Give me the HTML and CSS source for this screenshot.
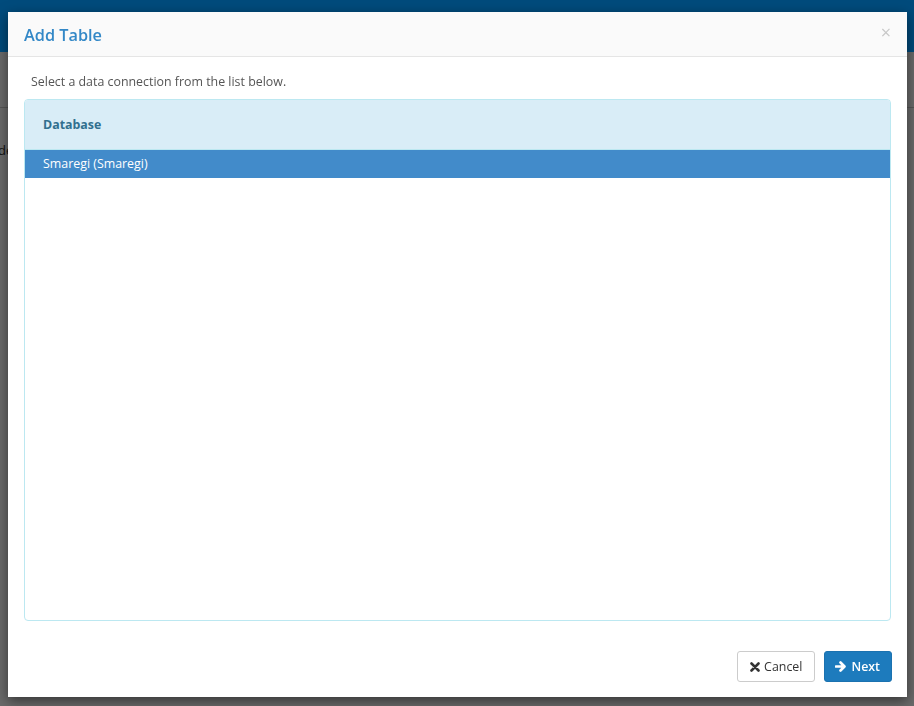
FILE: index.html
```html
<!DOCTYPE html>
<html lang="en">
<head>
    <meta charset="UTF-8">
    <title>Add Table</title>
    <link rel="stylesheet" href="styles.css">
</head>
<body>
    <div class="page">
        <div class="topbar"></div>
        <div class="subbar"></div>
        <div class="page-text">de</div>
    </div>

    <div class="modal">
        <div class="modal-header">
            <h4 class="modal-title">Add Table</h4>
            <span class="close">&times;</span>
        </div>
        <div class="modal-body">
            <p class="hint">Select a data connection from the list below.</p>
            <div class="panel">
                <div class="panel-heading">Database</div>
                <div class="list">
                    <div class="list-item active">Smaregi (Smaregi)</div>
                </div>
            </div>
        </div>
        <div class="modal-footer">
            <button class="btn btn-default">
                <svg width="10" height="10" viewBox="0 0 10 10"><path d="M1.5 1.5 L8.5 8.5 M8.5 1.5 L1.5 8.5" stroke="#333" stroke-width="2.6" stroke-linecap="round"/></svg>
                Cancel
            </button>
            <button class="btn btn-primary">
                <svg width="12" height="11" viewBox="0 0 12 11"><path d="M1 5.5 H9 M5.5 1.5 L9.5 5.5 L5.5 9.5" stroke="#fff" stroke-width="2.6" fill="none" stroke-linecap="round" stroke-linejoin="round"/></svg>
                Next
            </button>
        </div>
    </div>
</body>
</html>
```

FILE: styles.css
```css
html, body {
    margin: 0;
    padding: 0;
    height: 100%;
}
body {
    font-family: 'Open Sans', 'Noto Sans', sans-serif;
    font-size: 12.4px;
    color: #333;
    background: #6a6a6a;
    overflow: hidden;
}
/* page behind the dialog, already dimmed */
.page {
    height: 100%;
}
.topbar {
    height: 52px;
    background: #004b7c;
}
.subbar {
    height: 55px;
    border-bottom: 1px solid #555;
}
.page-text {
    margin-top: 33px;
    font-size: 13px;
    color: #111;
    margin-left: -2px;
}
.modal {
    position: fixed;
    left: 8px;
    top: 12px;
    width: 899px;
    height: 685px;
    background: #fff;
    box-shadow: 0 4px 12px rgba(0,0,0,0.5);
    display: flex;
    flex-direction: column;
}
.modal-header {
    height: 44px;
    background: #fafafa;
    border-bottom: 1px solid #e5e5e5;
    display: flex;
    align-items: center;
    justify-content: space-between;
    padding: 0 16px;
}
.modal-title {
    margin: 0;
    font-size: 16.3px;
    font-weight: 600;
    color: #3388c7;
    position: relative;
    top: 1px;
}
.close {
    font-size: 18px;
    color: #c8c8c8;
    line-height: 1;
    position: relative;
    top: -2px;
}
.modal-body {
    flex: 1;
    padding: 16px 16px 0;
    display: flex;
    flex-direction: column;
}
.hint {
    margin: 0 0 8px 7px;
    color: #555;
    line-height: 18px;
}
.panel {
    height: 520px;
    border: 1px solid #bce8f1;
    border-radius: 4px;
    overflow: hidden;
}
.panel-heading {
    height: 49px;
    line-height: 49px;
    background: #d9edf7;
    border-bottom: 1px solid #bce8f1;
    color: #31708f;
    font-weight: 700;
    padding: 0 18px;
}
.list-item {
    height: 28px;
    line-height: 28px;
    padding: 0 18px;
}
.list-item.active {
    background: #428bca;
    color: #fff;
}
.modal-footer {
    display: flex;
    justify-content: flex-end;
    gap: 9px;
    padding: 0 15px 15px;
}
.btn {
    height: 31px;
    padding: 0 12px;
    border-radius: 3px;
    font-family: inherit;
    font-size: 12.4px;
    display: flex;
    align-items: center;
    gap: 4px;
    cursor: pointer;
}
.btn-default {
    background: #fff;
    border: 1px solid #ccc;
    color: #333;
}
.btn-primary {
    padding: 0 11px 0 10px;
    background: #1d7bbd;
    border: 1px solid #1b72b0;
    color: #fff;
    font-weight: 600;
}
```
